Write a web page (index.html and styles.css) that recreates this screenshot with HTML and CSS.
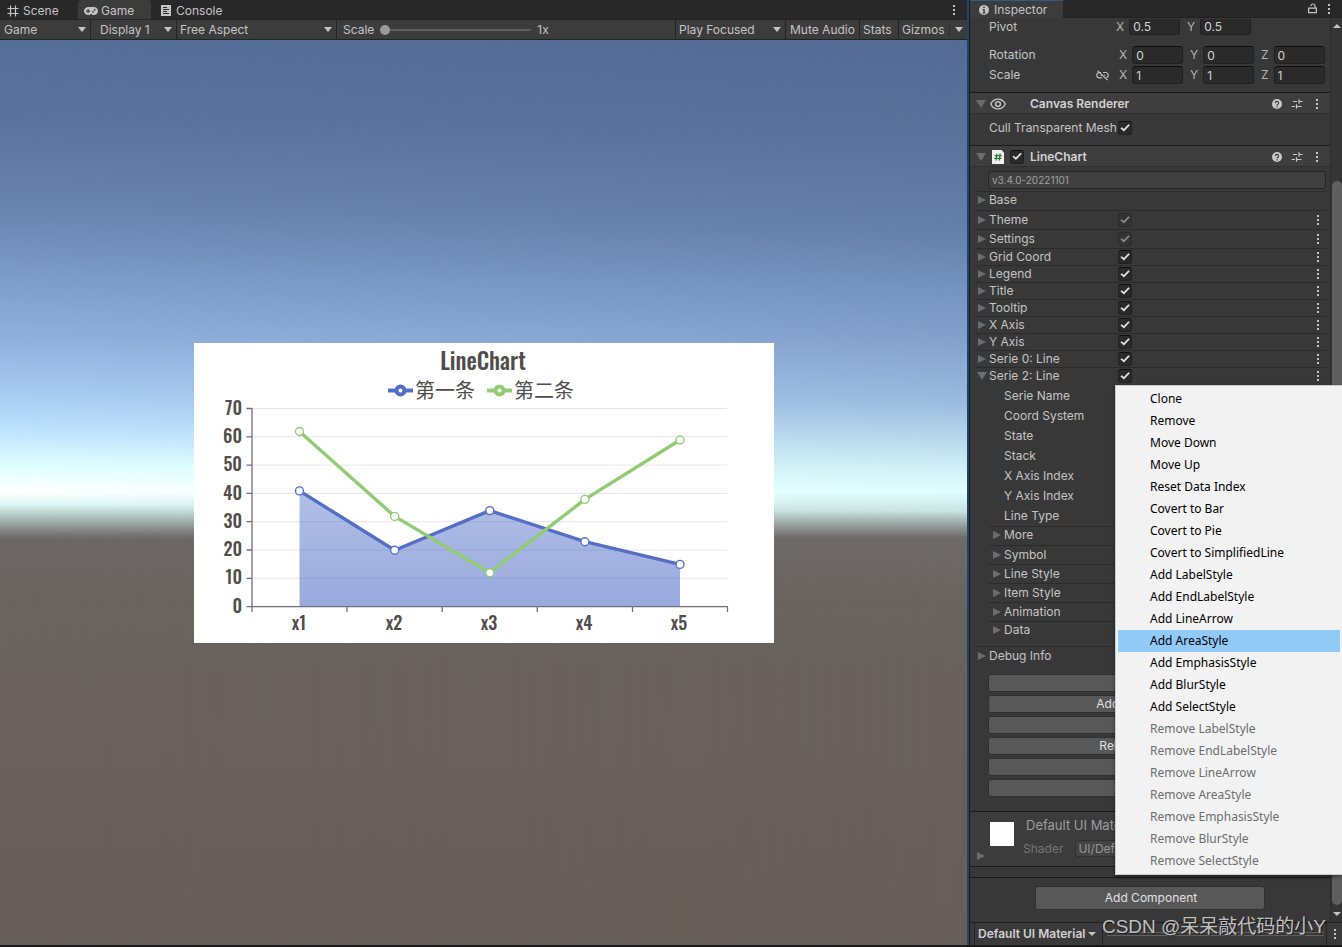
FILE: index.html
```html
<!DOCTYPE html>
<html lang="en">
<head>
<meta charset="utf-8">
<title>Editor</title>
<link rel="stylesheet" href="styles.css">
</head>
<body>
<svg class="defs" aria-hidden="true">
  <symbol id="dots" viewBox="0 0 4 12"><path d="M1 1h2v2H1zM1 5h2v2H1zM1 9h2v2H1z"/></symbol>
  <symbol id="help" viewBox="0 0 10 10"><circle cx="5" cy="5" r="5"/><path d="M3.400 4a1.600 1.600 0 1 1 2.500 1.300c-.6.4-.9.6-.9 1.100M5 7.300v1.100" fill="none" stroke="#3e3e3e" stroke-width="1.200"/></symbol>
  <symbol id="preset" viewBox="0 0 12 10"><path d="M2 2.500h4M8 2.500h3.500M8 .2v4.600M.5 7.500h3.500M6 7.500h4.500M5.500 5.200v4.600" fill="none" stroke="currentColor" stroke-width="1.200"/></symbol>
</svg>
<div class="editor">
  <main class="game">
    <nav class="tabs">
      <button class="tab scene"><svg class="icon" width="12" height="12" viewBox="0 0 12 12"><path d="M3.500 .5v11M8.500 .5v11M.5 3.500h11M.5 8.500h11" fill="none" stroke="currentColor" stroke-width="1.200"/></svg>Scene</button>
      <button class="tab active"><svg class="icon" width="14" height="8" viewBox="0 0 14 8"><path fill-rule="evenodd" d="M4 0h6a4 4 0 1 1-2.700 7H6.700A4 4 0 1 1 4 0zM3.500 2v1.500H2v1.200h1.500v1.500h1.200V4.700h1.500V3.500H4.700V2zM10.700 2a.8.8 0 1 0 .01 0zM9 4a.8.8 0 1 0 .01 0z"/></svg>Game</button>
      <button class="tab console"><svg class="icon" width="10" height="12" viewBox="0 0 10 12"><path fill-rule="evenodd" d="M0 0h10v11H0zM2 2v1h4V2zM2 4v1h6V4zM2 6v1h4V6zM2 8v1h6V8z"/></svg>Console</button>
      <button class="menu-btn" aria-label="Game view menu"><svg width="4" height="12"><use href="#dots"/></svg></button>
    </nav>
    <div class="toolbar">
      <label class="pick view"><select aria-label="View"><option>Game</option></select></label>
      <label class="pick display"><select aria-label="Display"><option>Display 1</option></select></label>
      <label class="pick aspect"><select aria-label="Aspect"><option>Free Aspect</option></select></label>
      <div class="scale"><label for="scale">Scale</label><input id="scale" type="range" min="1" max="5" value="1"><output for="scale">1x</output></div>
      <label class="pick play"><select aria-label="Play mode"><option>Play Focused</option></select></label>
      <button class="tool mute">Mute Audio</button>
      <button class="tool stats">Stats</button>
      <label class="pick gizmos"><select aria-label="Gizmos"><option>Gizmos</option></select></label>
    </div>
    <section class="viewport">
      <svg class="chart" viewBox="0 0 580 300" role="img" aria-label="LineChart">
        <defs><linearGradient id="area" x1="0" y1="0" x2="0" y2="1"><stop offset="0" stop-color="#5470c6" stop-opacity=".45"/><stop offset="1" stop-color="#5470c6" stop-opacity=".6"/></linearGradient></defs>
        <path class="grid" d="M58 65.500H533M58 93.800H533M58 122.100H533M58 150.400H533M58 178.700H533M58 207H533M58 235.300H533"/>
        <path fill="url(#area)" d="M105.500 147.900L200.700 207.200L295.800 167.600L390.900 198.700L486 221.400V263.500H105.500z"/>
        <path class="axis" d="M58 65V269M52.500 65.500H58M52.500 93.800H58M52.500 122.100H58M52.500 150.400H58M52.500 178.700H58M52.500 207H58M52.500 235.300H58M52.500 263.600H534M153 264v5M248.200 264v5M343.300 264v5M438.500 264v5M533.500 264v5"/>
        <path class="line blue" d="M105.500 147.900L200.700 207.200L295.800 167.600L390.900 198.700L486 221.400"/>
        <g class="mark blue"><circle cx="105.500" cy="147.900" r="4"/><circle cx="200.700" cy="207.200" r="4"/><circle cx="295.800" cy="167.600" r="4"/><circle cx="390.900" cy="198.700" r="4"/><circle cx="486" cy="221.400" r="4"/></g>
        <path class="line green" d="M105.500 88.500L200.700 173.400L295.800 229.800L390.900 156.400L486 97"/>
        <g class="mark green"><circle cx="105.500" cy="88.500" r="4"/><circle cx="200.700" cy="173.400" r="4"/><circle cx="295.800" cy="229.800" r="4"/><circle cx="390.900" cy="156.400" r="4"/><circle cx="486" cy="97" r="4"/></g>
        <path class="key blue" d="M194 47.500h25"/><circle class="keydot blue" cx="206.500" cy="47.500" r="4"/>
        <path class="key green" d="M293 47.500h25"/><circle class="keydot green" cx="305.500" cy="47.500" r="4"/>
        <text class="title" x="289" y="27">LineChart</text>
        <text class="legend" x="221" y="55">第一条</text><text class="legend" x="320" y="55">第二条</text>
        <g class="ylab"><text x="48" y="72">70</text><text x="48" y="100">60</text><text x="48" y="128">50</text><text x="48" y="157">40</text><text x="48" y="185">30</text><text x="48" y="213">20</text><text x="48" y="241">10</text><text x="48" y="270">0</text></g>
        <g class="xlab"><text x="105" y="287">x1</text><text x="200" y="287">x2</text><text x="295" y="287">x3</text><text x="390" y="287">x4</text><text x="485" y="287">x5</text></g>
      </svg>
    </section>
  </main>

  <aside class="inspector">
    <nav class="tabs">
      <button class="tab active"><svg class="icon" width="10" height="10" viewBox="0 0 10 10"><circle cx="5" cy="5" r="5"/><path d="M4.200 1.500h1.600V3H4.200zM3.500 4h2.300v3.400h.8v1H3.500v-1h.8V5h-.8z" fill="#3c3c3c"/></svg>Inspector</button>
      <button class="lock-btn" aria-label="Lock"><svg width="9" height="11" viewBox="0 0 9 11"><path d="M.6 5.200h7.800v4.500H.6zM7 5V3a2 2 0 0 0-4 0" fill="none" stroke="currentColor" stroke-width="1.200"/></svg></button>
      <button class="menu-btn" aria-label="Inspector menu"><svg width="4" height="12"><use href="#dots"/></svg></button>
    </nav>
    <div class="scroller">
      <div class="content">
        <div class="transform">
          <div class="vec pair"><span class="name">Pivot</span><label>X<input value="0.5"></label><label>Y<input value="0.5"></label></div>
          <div class="vec"><span class="name">Rotation</span><label>X<input value="0"></label><label>Y<input value="0"></label><label>Z<input value="0"></label></div>
          <div class="vec"><span class="name">Scale<svg class="link" width="13" height="11" viewBox="0 0 13 11"><path d="M5 2.500H3.500a2.700 2.700 0 0 0 0 5.400H6M7 2.500h2.500a2.700 2.700 0 0 1 1 5.200M4.500 5.200h1.500M8 5.200h1.200M1.500 .6l10 9.600" fill="none" stroke="currentColor" stroke-width="1.100"/></svg></span><label>X<input value="1"></label><label>Y<input value="1"></label><label>Z<input value="1"></label></div>
        </div>
        <header class="head"><i class="fold open"></i><svg class="eye" width="16" height="12" viewBox="0 0 16 12"><path d="M.7 6C4-.6 12-.6 15.300 6 12 12.600 4 12.600 .7 6z" fill="none" stroke="currentColor" stroke-width="1.300"/><circle cx="8" cy="6" r="2.400" fill="none" stroke="currentColor" stroke-width="1.400"/></svg><h2>Canvas Renderer</h2>
          <button aria-label="Help"><svg width="10" height="10"><use href="#help"/></svg></button><button aria-label="Presets"><svg width="12" height="10"><use href="#preset"/></svg></button><button aria-label="Options"><svg width="4" height="12"><use href="#dots"/></svg></button></header>
        <div class="cull"><label for="cull">Cull Transparent Mesh</label><input id="cull" type="checkbox" checked></div>
        <header class="head"><i class="fold open"></i><svg class="script" width="12" height="14" viewBox="0 0 12 14"><path d="M0 0h9.500L12 2.500V14H0z" fill="#f0f0f0"/><path d="M5 3.500L4 10.500M8.200 3.500l-1 7M2.500 5.600h7.300M2.200 8.400h7.300" fill="none" stroke="#2c7a3c" stroke-width="1.300"/></svg><input type="checkbox" checked aria-label="Enable LineChart"><h2>LineChart</h2>
          <button aria-label="Help"><svg width="10" height="10"><use href="#help"/></svg></button><button aria-label="Presets"><svg width="12" height="10"><use href="#preset"/></svg></button><button aria-label="Options"><svg width="4" height="12"><use href="#dots"/></svg></button></header>
        <input class="version" value="v3.4.0-20221101" readonly aria-label="Version">
        <div class="rows">
          <div class="row tall base"><i class="fold"></i><span>Base</span></div>
          <div class="row tall"><i class="fold"></i><label for="c1">Theme</label><input id="c1" type="checkbox" checked disabled><button aria-label="Options"><svg width="4" height="12"><use href="#dots"/></svg></button></div>
          <div class="row tall"><i class="fold"></i><label for="c2">Settings</label><input id="c2" type="checkbox" checked disabled><button aria-label="Options"><svg width="4" height="12"><use href="#dots"/></svg></button></div>
          <div class="row"><i class="fold"></i><label for="c3">Grid Coord</label><input id="c3" type="checkbox" checked><button aria-label="Options"><svg width="4" height="12"><use href="#dots"/></svg></button></div>
          <div class="row"><i class="fold"></i><label for="c4">Legend</label><input id="c4" type="checkbox" checked><button aria-label="Options"><svg width="4" height="12"><use href="#dots"/></svg></button></div>
          <div class="row"><i class="fold"></i><label for="c5">Title</label><input id="c5" type="checkbox" checked><button aria-label="Options"><svg width="4" height="12"><use href="#dots"/></svg></button></div>
          <div class="row"><i class="fold"></i><label for="c6">Tooltip</label><input id="c6" type="checkbox" checked><button aria-label="Options"><svg width="4" height="12"><use href="#dots"/></svg></button></div>
          <div class="row"><i class="fold"></i><label for="c7">X Axis</label><input id="c7" type="checkbox" checked><button aria-label="Options"><svg width="4" height="12"><use href="#dots"/></svg></button></div>
          <div class="row"><i class="fold"></i><label for="c8">Y Axis</label><input id="c8" type="checkbox" checked><button aria-label="Options"><svg width="4" height="12"><use href="#dots"/></svg></button></div>
          <div class="row"><i class="fold"></i><label for="c9">Serie 0: Line</label><input id="c9" type="checkbox" checked><button aria-label="Options"><svg width="4" height="12"><use href="#dots"/></svg></button></div>
          <div class="row"><i class="fold open"></i><label for="c10">Serie 2: Line</label><input id="c10" type="checkbox" checked><button aria-label="Options"><svg width="4" height="12"><use href="#dots"/></svg></button></div>
          <div class="fields"><span>Serie Name</span><span>Coord System</span><span>State</span><span>Stack</span><span>X Axis Index</span><span>Y Axis Index</span><span>Line Type</span></div>
          <div class="subrows">
            <div class="row tall base"><i class="fold"></i><span>More</span></div>
            <div class="row tall"><i class="fold"></i><span>Symbol</span></div>
            <div class="row tall"><i class="fold"></i><span>Line Style</span></div>
            <div class="row tall"><i class="fold"></i><span>Item Style</span></div>
            <div class="row tall"><i class="fold"></i><span>Animation</span></div>
            <div class="row"><i class="fold"></i><span>Data</span></div>
          </div>
          <div class="row tall debug"><i class="fold"></i><span>Debug Info</span></div>
        </div>
        <div class="actions"><button aria-label="Add Serie"></button><button>Add Main Component</button><button>Covert XY Axis</button><button>Rebuild Chart Object</button><button aria-label="Save As Image"></button><button>Check Warning</button></div>
        <section class="material">
          <div class="swatch"></div><i class="fold"></i>
          <div class="mat-name">Default UI Material</div>
          <label class="shader">Shader<select><option>UI/Default</option></select></label>
        </section>
        <div class="add"><button>Add Component</button></div>
      </div>
      <div class="scrollbar"><i class="up"></i><i class="thumb"></i><i class="down"></i></div>
    </div>
    <footer class="foot"><button class="preview">Default UI Material<i class="caret"></i></button><span class="grip"></span><button class="foot-menu" aria-label="Preview menu"><svg width="4" height="12"><use href="#dots"/></svg></button></footer>
  </aside>
</div>
<div class="popup" role="menu">
  <button role="menuitem">Clone</button><button role="menuitem">Remove</button><button role="menuitem">Move Down</button><button role="menuitem">Move Up</button><button role="menuitem">Reset Data Index</button><button role="menuitem">Covert to Bar</button><button role="menuitem">Covert to Pie</button><button role="menuitem">Covert to SimplifiedLine</button><button role="menuitem">Add LabelStyle</button><button role="menuitem">Add EndLabelStyle</button><button role="menuitem">Add LineArrow</button><button role="menuitem" class="hot">Add AreaStyle</button><button role="menuitem">Add EmphasisStyle</button><button role="menuitem">Add BlurStyle</button><button role="menuitem">Add SelectStyle</button><button role="menuitem" disabled>Remove LabelStyle</button><button role="menuitem" disabled>Remove EndLabelStyle</button><button role="menuitem" disabled>Remove LineArrow</button><button role="menuitem" disabled>Remove AreaStyle</button><button role="menuitem" disabled>Remove EmphasisStyle</button><button role="menuitem" disabled>Remove BlurStyle</button><button role="menuitem" disabled>Remove SelectStyle</button>
</div>
<div class="watermark">CSDN @呆呆敲代码的小Y</div>
</body>
</html>
```
FILE: styles.css
```css
* { box-sizing: border-box; }
body { margin: 0; height: 100vh; overflow: hidden; position: relative; background: #191919; color: #c4c4c4; font: 12px/16px Inter, "Liberation Sans", sans-serif; }
button, input, select { font: inherit; color: inherit; border: 0; margin: 0; padding: 0; background: none; border-radius: 0; appearance: none; outline: 0; }
svg { display: block; fill: currentColor; flex: none; }
.defs { position: absolute; width: 0; height: 0; }
.editor { display: flex; height: 100%; padding-bottom: 2px; }

.game { flex: 1; min-width: 0; display: flex; flex-direction: column; }
.tabs { display: flex; align-items: stretch; background: #282828; flex: none; }
.game .tabs { height: 19px; }
.tab { display: flex; align-items: center; gap: 4px; padding: 2px 8px 0 7px; }
.tab.scene { width: 78px; }
.tab.active { background: #3c3c3c; border-radius: 3px 3px 0 0; }
.game .tab.active { width: 73px; gap: 3px; padding-left: 6px; }
.tab.console { padding-left: 10px; gap: 5px; }
.menu-btn { width: 12px; margin-left: auto; display: grid; place-items: center; }
.game .menu-btn { margin-right: 7px; }
.toolbar { display: flex; height: 21px; flex: none; background: #3c3c3c; border: solid #232323; border-width: 1px 0; }
.toolbar > * { border-right: 1px solid #232323; display: flex; align-items: center; padding-left: 4px; }
.pick { position: relative; }
.pick select { width: 100%; height: 100%; }
.pick::after { content: ""; position: absolute; right: 4px; top: 7px; border: solid transparent; border-width: 5px 4px 0; border-top-color: #c4c4c4; }
.view { width: 91px; }
.display { width: 86px; }
.toolbar .display { padding-left: 9px; }
.aspect { width: 160px; }
.toolbar .aspect { padding-left: 3px; }
.scale { flex: 1; gap: 6px; }
.toolbar .scale { padding-left: 6px; }
.scale input { width: 151px; height: 12px; }
.scale input::-webkit-slider-runnable-track { height: 2px; background: #5e5e5e; }
.scale input::-webkit-slider-thumb { appearance: none; width: 10px; height: 10px; border-radius: 50%; background: #999; margin-top: -4px; }
.play { width: 110px; }
.toolbar .play { padding-left: 3px; }
.tool.mute { width: 74px; }
.tool.stats { width: 39px; padding-left: 3px; }
.gizmos { width: 68px; }
.toolbar .gizmos { padding-left: 3px; border-right: 0; }
.toolbar .gizmos::before { content: ""; position: absolute; right: 17px; top: 4px; height: 12px; border-left: 1px solid #2c2c2c; }

.viewport { flex: 1; position: relative; display: grid; place-items: center; background: linear-gradient(#546b95 0, #5b739c 11%, #6580aa 21%, #7392bd 27%, #84a1cc 33%, #9bbbdf 40%, #b5d4ea 43.500%, #d2f1f8 47.500%, #deffff 49.900%, #cbe4e2 52%, #9aa5a3 53.500%, #6f6b69 55%, #69645f 62%, #6a615c 70%, #695f5a 100%); }
.viewport::before { content: ""; position: absolute; inset: 0; background: linear-gradient(#566f99 0, #5b739d 9%, #6a85b0 19%, #7d9bc9 26%, #8fb0dd 33%, #a8cbf0 39%, #bde1ff 43%, #deffff 47%, #fff 50%, #dcf7f4 51.300%, #a9bab6 52.900%, #7a7a78 54.500%, #6c6765 55.200%, #69645f 62%, #6a615c 70%, #695f5a 100%); -webkit-mask-image: linear-gradient(90deg, #000, transparent); mask-image: linear-gradient(90deg, #000, transparent); }
.chart { position: relative; width: 60%; max-width: 580px; background: #fff; }
.grid { stroke: #e0e6f1; fill: none; }
.axis { stroke: #6e7079; stroke-width: 1.300; fill: none; }
.line { fill: none; stroke-width: 3.400; stroke-linejoin: round; }
.line.blue, .mark.blue, .key.blue, .keydot.blue { stroke: #5470c6; }
.line.green, .mark.green, .key.green, .keydot.green { stroke: #91cc75; }
.mark { fill: #fff; stroke-width: 1.400; }
.key { stroke-width: 4; }
.keydot { fill: #fff; stroke-width: 4; }
.chart text { fill: #514d4d; font-family: Oswald, "Liberation Sans Narrow", Roboto, sans-serif; font-size: 18px; font-weight: 500; }
.chart .title { font-size: 23px; text-anchor: middle; }
.chart .legend { font-family: "Noto Sans CJK SC", sans-serif; font-size: 20px; font-weight: 400; }
.ylab { text-anchor: end; }
.xlab { text-anchor: middle; }

.inspector { width: 375px; flex: none; display: flex; flex-direction: column; background: #383838; border-left: 2px solid #1f4470; box-shadow: inset 1px 0 #191919; padding-left: 1px; }
.inspector .tabs { height: 18px; border-bottom: 1px solid #202020; }
.inspector .tab.active { width: 93px; gap: 5px; padding: 1px 8px 0 9px; border-top: 1px solid #2c5d87; border-radius: 0; height: 18px; }
.lock-btn { margin-left: auto; width: 22px; display: grid; place-items: center; }
.inspector .menu-btn { margin: 0 7px 0 0; }
.scroller { flex: 1; min-height: 0; display: flex; }
.content { flex: 1; min-width: 0; display: flex; flex-direction: column; }
.transform { height: 75px; border-bottom: 1px solid #1a1a1a; padding: 1px 3px 0 19px; }
.vec { display: flex; align-items: center; height: 20px; gap: 7px; }
.vec.pair { height: 18px; margin-bottom: 8px; align-items: flex-start; }
.vec .name { width: 123px; display: flex; justify-content: space-between; align-items: center; }
.vec.pair .name { width: 120px; }
.vec label { display: flex; align-items: center; gap: 5px; width: 64px; color: #b4b4b4; }
.vec input { flex: 1; width: 0; height: 18px; background: #2a2a2a; border: 1px solid #202020; border-top-color: #0f0f0f; border-radius: 3px; padding-left: 3px; color: #d2d2d2; }
.vec.pair input { height: 16px; border-top: 0; border-radius: 0 0 3px 3px; }
.vec .link { margin-right: 3px; }
.head { display: flex; align-items: center; height: 21px; background: #3e3e3e; border-bottom: 1px solid #303030; padding: 1px 7px 0 6px; color: #c8c8c8; }
.head h2 { flex: 1; margin: 0; font-size: 12px; line-height: 16px; font-weight: 600; color: #d2d2d2; }
.head button { width: 20px; display: grid; place-items: center; }
.head button:last-child { width: 12px; margin-left: 4px; }
.eye { margin: 0 24px 0 4px; }
.script { margin: 0 6px; }
.head input { margin-right: 6px; }
.fold { width: 0; height: 0; flex: none; border: solid transparent; border-width: 4px 0 4px 8px; border-left-color: #6c6c6c; }
.fold.open { border-width: 8px 5px 0; border-left-color: transparent; border-top-color: #6c6c6c; }
input[type="checkbox"] { width: 14px; height: 14px; flex: none; background: #2a2a2a; border: 1px solid #202020; border-top-color: #0f0f0f; border-radius: 3px; display: grid; place-items: center; }
input[type="checkbox"]:checked::before { content: ""; width: 10px; height: 8px; background: #e4e4e4; clip-path: polygon(4% 52%, 18% 40%, 38% 64%, 84% 4%, 98% 16%, 39% 94%); }
input[type="checkbox"]:disabled { background: #333; border-color: #2b2b2b; }
input[type="checkbox"]:disabled::before { background: #8a8a8a; }
.cull { height: 32px; border-bottom: 1px solid #1a1a1a; display: flex; align-items: center; padding: 0 0 3px 19px; }
.cull label { width: 129px; white-space: nowrap; }
.version { height: 18px; margin: 4px 4px 2px 18px; flex: none; background: #404040; border: 1px solid #252525; border-radius: 3px; padding-left: 3px; font-size: 10px; color: #a0a0a0; }
.rows { padding: 0 4px; }
.row { display: grid; grid-template-columns: 15px 129px 1fr 16px; align-items: center; height: 17px; border-top: 1px solid #2b2b2b; }
.row .fold { margin-left: 4px; }
.row .fold.open { margin-left: 3px; }
.row.tall { height: 19px; }
.row.base { padding-bottom: 2px; }
.row button { display: grid; place-items: center; grid-column: 4; }
.fields { display: grid; grid-auto-rows: 20px; align-items: center; padding: 2px 0 0 30px; }
.subrows { padding-left: 15px; }
.subrows .row:last-child { height: 25px; padding-bottom: 8px; }
.actions { display: grid; gap: 3px; padding: 9px 4px 14px 18px; }
.actions button, .add button { background: #585858; border: 1px solid #303030; border-radius: 3px; height: 18px; color: #e0e0e0; line-height: 16px; padding-left: 2px; }
.material { display: grid; grid-template-columns: 43px 1fr; grid-template-rows: 20px 27px; height: 56px; border-top: 1px solid #1a1a1a; border-bottom: 1px solid #1a1a1a; background: #3c3c3c; padding: 3px 0 0 10px; color: #9c9c9c; position: relative; align-items: center; }
.swatch { grid-row: 1 / 3; width: 24px; height: 24px; background: #fff; margin: 0 0 9px 10px; }
.material .fold { position: absolute; left: 7px; bottom: 6px; }
.mat-name { font-size: 13px; padding-left: 3px; }
.shader { display: flex; align-items: center; gap: 12px; color: #757575; }
.shader select { width: 240px; height: 17px; background: #444; border: 1px solid #303030; border-radius: 3px; padding-left: 2px; color: #969696; }
.add { margin-top: 10px; border-top: 1px solid #1a1a1a; padding: 8px 65px 0; display: grid; }
.add button { height: 24px; }
.scrollbar { width: 12px; background: #353535; border-left: 1px solid #2c2c2c; display: flex; flex-direction: column; align-items: center; padding: 6px 0; }
.up, .down { border: solid transparent; border-width: 0 4px 4px; border-bottom-color: #c4c4c4; }
.down { border-width: 4px 4px 0; border-top-color: #c4c4c4; }
.thumb { flex: 1; width: 10px; margin: 153px 0 7px; background: #5f5f5f; border-radius: 5px; }
.foot { height: 23px; flex: none; display: flex; align-items: center; border-top: 1px solid #1f1f1f; background: #3a3a3a; }
.preview { display: flex; align-items: center; align-self: stretch; gap: 3px; margin-left: 4px; padding: 0 4px 0 3px; border: solid #232323; border-width: 0 1px; font-weight: 600; width: 129px; color: #d0d0d0; white-space: nowrap; }
.caret { border: solid transparent; border-width: 4px 4px 0; border-top-color: #c4c4c4; }
.grip { flex: 1; height: 4px; margin: 0 2px 0 4px; border: solid #606060; border-width: 1px 0; }
.foot-menu { width: 16px; display: grid; place-items: center; align-self: stretch; border-left: 1px solid #232323; }

.popup { position: absolute; right: 0; top: 385px; width: 227px; padding: 2px; background: #f2f2f2; border: solid #ccc; border-width: 1px 0 1px 1px; display: grid; font-family: "Noto Sans", sans-serif; box-shadow: 0 2px 4px #0006; }
.popup button { height: 22px; padding-left: 32px; text-align: left; color: #000; }
.popup button:disabled { color: #6d6d6d; }
.popup .hot { background: #91c9f7; }
.watermark { position: absolute; right: 16px; bottom: 7px; font: 19px/26px "Liberation Sans", "Noto Sans CJK SC", sans-serif; color: #c0c0c0; text-shadow: 1px 1px 1px #0008; white-space: nowrap; }
```
